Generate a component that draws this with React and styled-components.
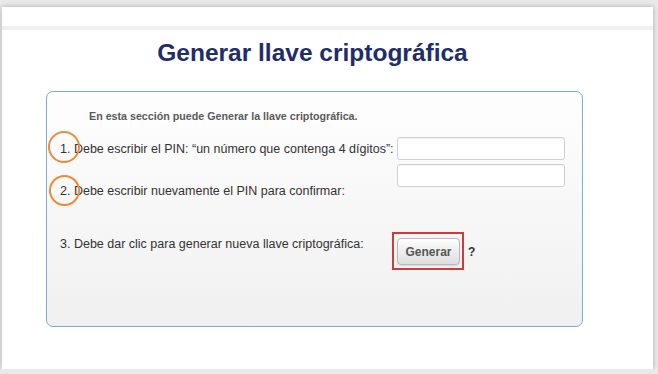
import styled, { createGlobalStyle } from "styled-components";

const GlobalStyle = createGlobalStyle`
  html, body {
    margin: 0;
    padding: 0;
    background: #e9e9e9;
    font-family: "Liberation Sans", Arial, Helvetica, sans-serif;
  }
`;

const Page = styled.div`
  box-sizing: border-box;
  width: 651px;
  height: 362px;
  margin: 7px 0 0 2px;
  background: #fff;
  box-shadow: 0 0 5px rgba(0, 0, 0, 0.28);
`;

const TopBar = styled.div`
  height: 19px;
  border-bottom: 4px solid #efefef;
`;

const Content = styled.div`
  padding: 8px 70px 0 44px;
`;

const Title = styled.h1`
  margin: 0 0 23px;
  text-align: center;
  font-size: 24.5px;
  line-height: 30px;
  font-weight: bold;
  color: #222d68;
  transform: translateX(-2px);
`;

const Panel = styled.div`
  position: relative;
  box-sizing: border-box;
  height: 236px;
  padding: 17px 0 0 13px;
  border: 1px solid #7ea9d0;
  border-radius: 7px;
  background: linear-gradient(#fefefe, #f0f0f0);
`;

const Intro = styled.p`
  margin: 0 0 14px 29px;
  font-size: 10.7px;
  line-height: 14px;
  font-weight: bold;
  color: #5a5a5a;
`;

const Form = styled.div`
  display: grid;
  grid-template-columns: 337px auto;
  row-gap: 4px;
  align-items: start;
`;

const Label = styled.div`
  font-size: 12.5px;
  line-height: 16px;
  white-space: nowrap;
  color: #333;
  padding-top: ${(p) => p.$shift || 0}px;
  margin-top: ${(p) => p.$gap || 0}px;
`;

const Field = styled.input`
  box-sizing: border-box;
  width: 168px;
  height: 23px;
  margin: 0;
  border: 1px solid #cfcfcf;
  border-radius: 3px;
  background: #fff;
  box-shadow: inset 0 1px 1px rgba(0, 0, 0, 0.05);
  outline: none;
`;

const ActionCell = styled.div`
  display: flex;
  align-items: center;
  gap: 4px;
  margin: 29px 0 0 -5px;
`;

const Highlight = styled.div`
  box-sizing: border-box;
  border: 2px solid #cf3a3d;
  padding: 4px 2px 3px 3px;
`;

const Button = styled.button`
  box-sizing: border-box;
  width: 63px;
  height: 27px;
  border: 1px solid #b9b9b9;
  border-radius: 4px;
  background: linear-gradient(#fdfdfd, #dedede);
  box-shadow: 0 1px 1px rgba(0, 0, 0, 0.12);
  font-family: "Liberation Sans", Arial, sans-serif;
  font-size: 12px;
  font-weight: bold;
  color: #555;
  padding: 0;
`;

const Help = styled.span`
  font-size: 12px;
  font-weight: bold;
  color: #333;
  margin-top: 1px;
`;

const Ring = styled.span`
  position: absolute;
  left: ${(p) => p.$x}px;
  top: ${(p) => p.$y}px;
  width: ${(p) => p.$size}px;
  height: ${(p) => p.$size}px;
  box-sizing: border-box;
  border: 2px solid #ec8a3c;
  border-radius: 50%;
  pointer-events: none;
`;

export default function App() {
  return (
    <>
      <GlobalStyle />
      <Page>
        <TopBar />
        <Content>
          <Title>Generar llave criptográfica</Title>
          <Panel>
            <Intro>En esta sección puede Generar la llave criptográfica.</Intro>
            <Form>
              <Label $shift={4}>
                1. Debe escribir el PIN: “un número que contenga 4 dígitos”:
              </Label>
              <Field type="password" />
              <Label $shift={19}>
                2. Debe escribir nuevamente el PIN para confirmar:
              </Label>
              <Field type="password" />
              <Label $gap={29} $shift={4}>
                3. Debe dar clic para generar nueva llave criptográfica:
              </Label>
              <ActionCell>
                <Highlight>
                  <Button>Generar</Button>
                </Highlight>
                <Help>?</Help>
              </ActionCell>
            </Form>
            <Ring $x={1} $y={39} $size={32} />
            <Ring $x={2} $y={83} $size={31} />
          </Panel>
        </Content>
      </Page>
    </>
  );
}
